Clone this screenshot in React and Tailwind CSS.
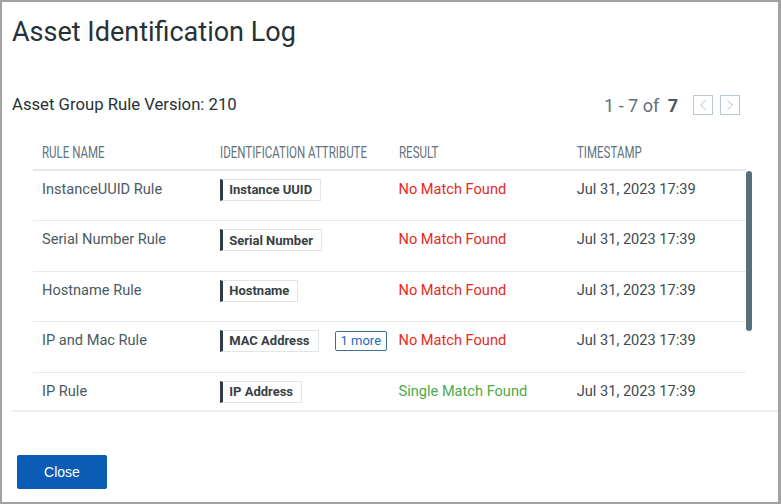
import { ChevronLeft, ChevronRight } from 'lucide-react'

const rows = [
    { name: 'InstanceUUID Rule', attr: 'Instance UUID', result: 'No Match Found', ok: false },
    { name: 'Serial Number Rule', attr: 'Serial Number', result: 'No Match Found', ok: false },
    { name: 'Hostname Rule', attr: 'Hostname', result: 'No Match Found', ok: false },
    { name: 'IP and Mac Rule', attr: 'MAC Address', more: 1, result: 'No Match Found', ok: false },
    { name: 'IP Rule', attr: 'IP Address', result: 'Single Match Found', ok: true },
    { name: 'Fqdn Rule', attr: 'FQDN', result: 'No Match Found', ok: false },
    { name: 'NetBIOS Rule', attr: 'NetBIOS Name', result: 'No Match Found', ok: false },
]

// condensed column titles: no condensed face installed, so squeeze Roboto
const HeadCell = ({ children }) => (
    <div className="pl-[9px] whitespace-nowrap">
        <span className="inline-block origin-left scale-x-[0.72] text-[16px] leading-[20px]">{children}</span>
    </div>
)

const App = () => {
    return (
        <div
            className="w-[781px] h-[504px] bg-white border-2 border-r-[3px] border-[#a3a3a3] flex flex-col text-[#3c4a52]"
            style={{ fontFamily: 'Roboto, "Liberation Sans", sans-serif' }}
        >
            <h1 className="pl-[10px] pt-[14px] text-[27px] leading-[32px] text-[#263238]">Asset Identification Log</h1>

            <div className="flex items-center justify-between pl-[10px] pr-[38px] mt-[45px] h-[24px]">
                <p className="text-[16.7px] text-[#263238]">Asset Group Rule Version: 210</p>
                <div className="flex items-center">
                    <span className="text-[18px] text-[#5f717b]">1 - 7 of <b className="ml-1 font-bold text-[#4a5a63]">7</b></span>
                    <button className="ml-[15px] w-[20px] h-[20px] border border-[#b9c8d0] flex items-center justify-center text-[#a9b8c0]">
                        <ChevronLeft size={18} strokeWidth={1.2} />
                    </button>
                    <button className="ml-[7px] w-[20px] h-[20px] border border-[#b9c8d0] flex items-center justify-center text-[#a9b8c0]">
                        <ChevronRight size={18} strokeWidth={1.2} />
                    </button>
                </div>
            </div>

            <div className="mt-[24px] ml-[10px] border-b-2 border-[#eeeeee]">
                <div className="ml-[21px] w-[713px] h-[30px] pb-[6px] grid grid-cols-4 items-center border-b-2 border-[#e4e9eb] text-[#5f7380] uppercase">
                    <HeadCell>Rule Name</HeadCell>
                    <HeadCell>Identification Attribute</HeadCell>
                    <HeadCell>Result</HeadCell>
                    <HeadCell>Timestamp</HeadCell>
                </div>

                <div className="relative h-[239px] overflow-hidden">
                    <div className="ml-[21px] w-[713px]">
                        {rows.map((row) => (
                            <div key={row.name} className="grid grid-cols-4 h-[50.4px] pt-[8px] border-b border-[#e6eaec] text-[14.6px]">
                                <div className="pl-[9px] h-[22px] flex items-center text-[#4b5a62]">{row.name}</div>
                                <div className="pl-[9px] h-[22px] flex items-center">
                                    <span className="h-[22px] flex items-center border border-[#dfe6e9] border-l-[3px] border-l-[#2e3d45] pl-[6px] pr-[8px] text-[13px] font-bold text-[#383f44]">
                                        {row.attr}
                                    </span>
                                    {row.more && (
                                        <span className="ml-[16px] h-[20px] flex items-center border border-[#3f6f96] rounded-[2px] px-[5px] text-[13px] text-[#1d6bc4]">
                                            {row.more} more
                                        </span>
                                    )}
                                </div>
                                <div className={`pl-[9px] h-[22px] flex items-center ${row.ok ? 'text-[#4caa4c]' : 'text-[#e8291c]'}`}>
                                    {row.result}
                                </div>
                                <div className="pl-[9px] h-[22px] flex items-center text-[#3c4a52]">Jul 31, 2023 17:39</div>
                            </div>
                        ))}
                    </div>
                    {/* scroll thumb */}
                    <div className="absolute left-[734px] top-0 w-[6px] h-[160px] rounded-full bg-[#5a6f7c]" />
                </div>
            </div>

            <div className="mt-[43px] pl-[15px]">
                <button className="w-[90px] h-[34px] bg-[#0b5cb5] rounded-[2px] text-white text-[14px] font-medium" style={{ fontFamily: '"Liberation Sans", Arial, sans-serif' }}>
                    Close
                </button>
            </div>
        </div>
    )
}

export default App
